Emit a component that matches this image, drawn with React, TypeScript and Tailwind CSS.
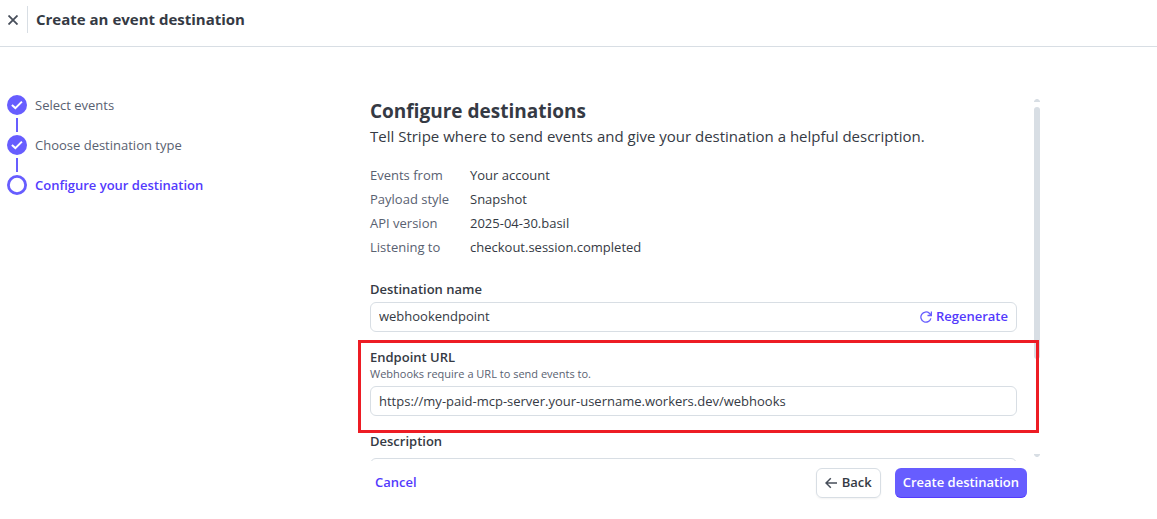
import { useState } from 'react'
import { clsx } from 'clsx'

const steps = [
  { label: 'Select events', done: true },
  { label: 'Choose destination type', done: true },
  { label: 'Configure your destination', done: false },
]

const details = [
  { term: 'Events from', value: 'Your account' },
  { term: 'Payload style', value: 'Snapshot' },
  { term: 'API version', value: '2025-04-30.basil' },
  { term: 'Listening to', value: 'checkout.session.completed' },
]

const labelClass = 'text-[13px] leading-[18px] font-semibold'

function StepIcon({ done }: { done: boolean }) {
  return (
    <svg className="h-5 w-5 shrink-0" viewBox="0 0 20 20" fill="none" aria-hidden="true">
      {done ? (
        <>
          <circle cx="10" cy="10" r="10" fill="#675dff" />
          <path d="M4.9 9.9 8.4 13.1 14.9 6.6" stroke="#fff" strokeWidth="2" />
        </>
      ) : (
        <circle cx="10" cy="10" r="8.6" stroke="#675dff" strokeWidth="2.8" />
      )}
    </svg>
  )
}

function Steps() {
  return (
    <ol className="w-[370px] shrink-0 pt-12 pl-[7px] text-[13px] leading-5 text-[#596171]">
      {steps.map((step, i) => (
        <li key={step.label}>
          {i > 0 && <div className="my-[3px] ml-[9px] h-[14px] w-0.5 bg-[#675dff]" />}
          <div
            className={clsx('flex items-center gap-2', !step.done && 'font-semibold text-[#533afd]')}
          >
            <StepIcon done={step.done} />
            {step.label}
          </div>
        </li>
      ))}
    </ol>
  )
}

function ScrollRail() {
  return (
    <div className="flex w-[6px] shrink-0 flex-col items-center pt-[2px] pb-1" aria-hidden="true">
      <svg className="h-[3px] w-[6px]" viewBox="0 0 6 3">
        <path d="M0 3V2L2 0H4L6 2V3Z" fill="#d8dee4" />
      </svg>
      <div className="mt-[5px] h-[252px] w-full rounded-full bg-[#d8dee4]" />
      <svg className="mt-auto h-[3px] w-[6px]" viewBox="0 0 6 3">
        <path d="M0 0H6V1L4 3H2L0 1Z" fill="#d8dee4" />
      </svg>
    </div>
  )
}

export default function App() {
  const [name, setName] = useState('webhookendpoint')
  const [url, setUrl] = useState('https://my-paid-mcp-server.your-username.workers.dev/webhooks')
  const [description, setDescription] = useState('')

  return (
    <div className="flex h-screen flex-col bg-white font-['Open_Sans',sans-serif] text-[#353a44]">
      <header className="flex h-[47px] shrink-0 border-b border-[#d8dee4] pt-[6px]">
        <button type="button" aria-label="Close" className="flex h-[27px] w-[27px] items-center pl-2">
          <svg className="h-[10px] w-[10px]" viewBox="0 0 10 10" fill="none">
            <path d="M.5.5 9.5 9.5M9.5.5.5 9.5" stroke="#474e5a" strokeWidth="1.8" />
          </svg>
        </button>
        <h1 className="flex h-[27px] items-center border-l border-[#d8dee4] pl-2 text-[15px] font-bold">
          Create an event destination
        </h1>
      </header>

      <div className="flex min-h-0 flex-1">
        <Steps />
        <main className="flex max-w-[670px] min-w-0 flex-1 flex-col pt-[50px] pb-[21px]">
          <div className="relative -ml-3 flex min-h-0 flex-1 overflow-hidden pl-3">
            <form className="mr-[17px] min-w-0 flex-1">
              <h2 className="text-[19px] leading-7 font-bold">Configure destinations</h2>
              <p className="text-[15px] leading-[22px]">
                Tell Stripe where to send events and give your destination a helpful description.
              </p>
              <dl className="mt-4 mb-[21px] grid grid-cols-[100px_1fr] text-[13px] leading-6">
                {details.map((d) => (
                  <div key={d.term} className="contents">
                    <dt className="text-[#596171]">{d.term}</dt>
                    <dd>{d.value}</dd>
                  </div>
                ))}
              </dl>

              <div className="flex flex-col gap-4">
                <div className="flex flex-col gap-1">
                  <label htmlFor="name" className={labelClass}>
                    Destination name
                  </label>
                  <div className="flex h-[30px] items-center rounded-md border border-[#d8dee4] pr-2">
                    <input
                      id="name"
                      value={name}
                      onChange={(e) => setName(e.target.value)}
                      className="min-w-0 flex-1 bg-transparent px-2 text-[13px] outline-none"
                    />
                    <button
                      type="button"
                      className="flex items-center gap-1 text-[13px] font-semibold text-[#533afd]"
                    >
                      <svg className="h-3 w-3" viewBox="0 0 12 12" fill="none">
                        <path
                          d="M10.9 7.4A5.1 5.1 0 1 1 9.4 2.3L11.2 4.2M11.4.6V4.5H7.5"
                          stroke="#675dff"
                          strokeWidth="1.3"
                        />
                      </svg>
                      Regenerate
                    </button>
                  </div>
                </div>

                <div className="relative flex flex-col gap-1">
                  <div className="flex flex-col">
                    <label htmlFor="url" className={labelClass}>
                      Endpoint URL
                    </label>
                    <span id="url-hint" className="text-[11px] leading-4 text-[#596171]">
                      Webhooks require a URL to send events to.
                    </span>
                  </div>
                  <input
                    id="url"
                    aria-describedby="url-hint"
                    value={url}
                    onChange={(e) => setUrl(e.target.value)}
                    className="h-[30px] w-full rounded-md border border-[#d8dee4] px-2 text-[13px] outline-none"
                  />
                  <div className="pointer-events-none absolute -top-2 -right-[22px] -bottom-[17px] -left-3 z-10 border-3 border-[#ed1c24]" />
                </div>

                <div className="flex flex-col gap-2">
                  <label htmlFor="description" className={labelClass}>
                    Description
                  </label>
                  <textarea
                    id="description"
                    value={description}
                    onChange={(e) => setDescription(e.target.value)}
                    className="h-20 w-full resize-none rounded-md border border-[#d8dee4] p-2 text-[13px] outline-none"
                  />
                </div>
              </div>
            </form>
            <ScrollRail />
          </div>

          <footer className="mt-[7px] mr-[13px] flex h-[30px] shrink-0 items-center text-[13px] font-semibold">
            <button type="button" className="px-[5px] text-[#533afd]">
              Cancel
            </button>
            <button
              type="button"
              className="ml-auto flex h-[30px] items-center gap-[5px] rounded-md border border-[#d8dee4] px-2 shadow-xs"
            >
              <svg className="h-3 w-3" viewBox="0 0 12 12" fill="none">
                <path d="M12 6H1.2M5.8 1.2 1 6 5.8 10.8" stroke="#474e5a" strokeWidth="1.5" />
              </svg>
              Back
            </button>
            <button
              type="button"
              className="ml-[14px] h-[30px] rounded-md border-b border-[#533afd] bg-[#675dff] px-2 text-white"
            >
              Create destination
            </button>
          </footer>
        </main>
      </div>
    </div>
  )
}
